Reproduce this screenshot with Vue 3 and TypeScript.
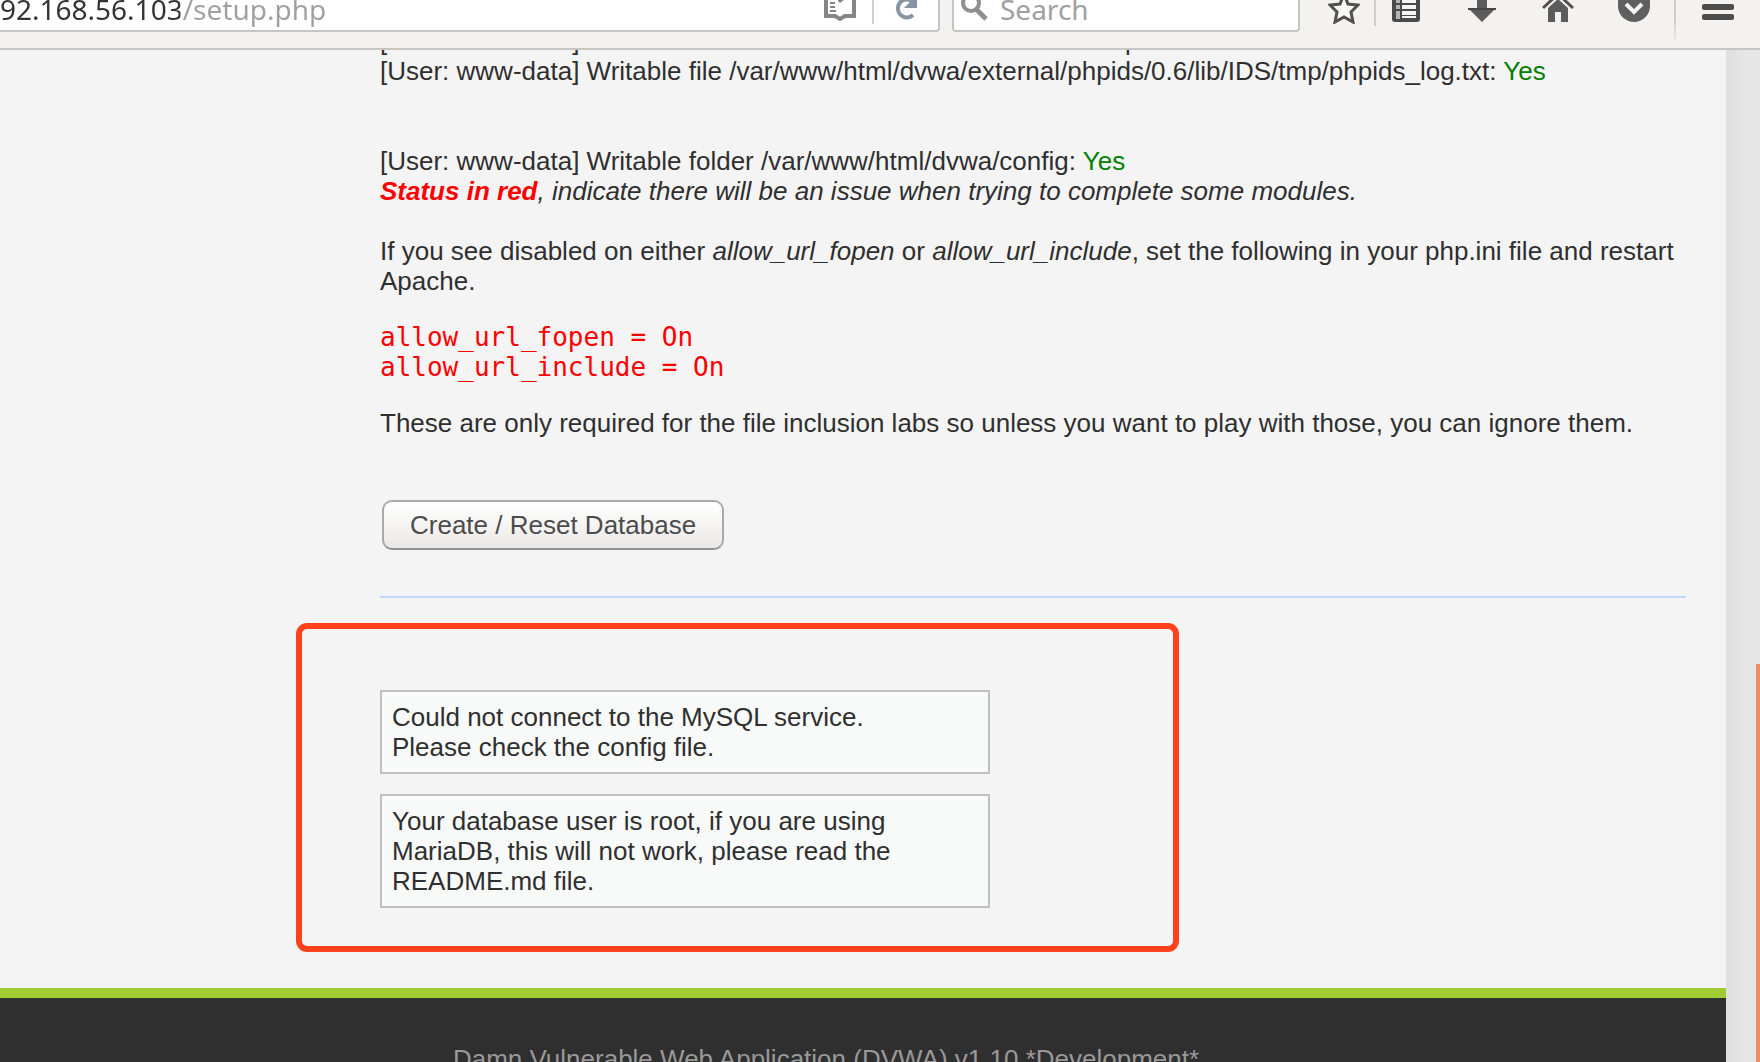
<script setup lang="ts">
import { ref } from 'vue'

interface Check {
  target: string
  status: string
  gap: boolean
}

const address = ref('92.168.56.103/setup.php')
const query = ref('')

const checks: Check[] = [
  { target: 'folder /var/www/html/dvwa/hackable/uploads/', status: 'Yes', gap: false },
  { target: 'file /var/www/html/dvwa/external/phpids/0.6/lib/IDS/tmp/phpids_log.txt', status: 'Yes', gap: true },
  { target: 'folder /var/www/html/dvwa/config', status: 'Yes', gap: false },
]

const messages: string[][] = [
  ['Could not connect to the MySQL service.', 'Please check the config file.'],
  ['Your database user is root, if you are using MariaDB, this will not work, please read the README.md file.'],
]
</script>

<template>
  <div class="window">
    <header class="toolbar">
      <div class="row">
        <div class="field address">
          <input v-model="address" class="url" type="text" aria-label="Address" />
          <button class="tool reader" type="button" aria-label="Reader view">
            <svg width="32" height="32" viewBox="0 0 32 32">
              <path d="M2 2h10l4 3 4-3h10v22h-9l-5 3-5-3H2z" fill="#fff" stroke="#858585" stroke-width="4" />
              <path d="M6 7h6M6 11h5M6 15h5M6 19h6" stroke="#858585" stroke-width="2" />
              <path d="M14 4v5l2 2 4-3V4" fill="#858585" />
            </svg>
          </button>
          <span class="divider inner"></span>
          <button class="tool reload" type="button" aria-label="Reload">
            <svg width="32" height="32" viewBox="0 0 32 32">
              <path d="M23 23a9 9 0 1 1-1-14" fill="none" stroke="#8794a1" stroke-width="4" />
              <path d="M27 3v13H14z" fill="#8794a1" />
            </svg>
          </button>
        </div>
        <div class="field search">
          <svg class="glass" width="32" height="32" viewBox="0 0 32 32">
            <circle cx="13" cy="11" r="8" fill="none" stroke="#8f8f8f" stroke-width="4" />
            <path d="M18 17l10 10" stroke="#8f8f8f" stroke-width="5" />
          </svg>
          <input v-model="query" class="query" type="text" placeholder="Search" aria-label="Search" />
        </div>
        <nav class="tools">
          <button class="tool narrow" type="button" aria-label="Bookmark this page">
            <svg width="32" height="32" viewBox="0 0 32 32">
              <path d="M16 2l4 10 10 1-7 7 2 10-9-5-9 5 2-10-7-7 10-1z" fill="#f7f7f6" stroke="#505050" stroke-width="3" />
            </svg>
          </button>
          <span class="divider"></span>
          <button class="tool narrow list" type="button" aria-label="Bookmarks">
            <svg width="32" height="32" viewBox="0 0 32 32">
              <rect x="2" y="2" width="28" height="28" rx="3" fill="#4a4a4a" />
              <path d="M6 9h4M6 15h4M6 21h4M6 25h4" stroke="#b4b4b4" stroke-width="4" />
              <path d="M12 9h14M12 15h14M12 21h14" stroke="#f5f5f5" stroke-width="4" />
              <path d="M12 25h14" stroke="#f5f5f5" stroke-width="2" />
            </svg>
          </button>
          <button class="tool" type="button" aria-label="Downloads">
            <svg width="32" height="32" viewBox="0 0 32 32">
              <path d="M11 2h10v14h9L16 30 2 16h9z" fill="#5c5c5c" />
              <path d="M2 17h28" stroke="#484848" stroke-width="2" />
            </svg>
          </button>
          <button class="tool" type="button" aria-label="Home">
            <svg width="32" height="32" viewBox="0 0 32 32">
              <path d="M1 16L16 2l15 14" fill="none" stroke="#505050" stroke-width="3" />
              <path d="M6 16L16 7l10 9v14h-7V20h-6v10H6z" fill="#5c5c5c" />
            </svg>
          </button>
          <button class="tool" type="button" aria-label="Save to Pocket">
            <svg width="32" height="32" viewBox="0 0 32 32">
              <path d="M3 2h26l3 3v9a16 16 0 0 1-32 0V5z" fill="#5f5f5f" />
              <path d="M8 12l8 8 8-8" fill="none" stroke="#f4f4f4" stroke-width="4" />
            </svg>
          </button>
          <span class="divider tall"></span>
          <button class="tool menu" type="button" aria-label="Open menu">
            <svg width="32" height="32" viewBox="0 0 32 32">
              <rect y="2" width="32" height="6" rx="2" fill="#4d4d4d" />
              <rect y="12" width="32" height="6" rx="2" fill="#4d4d4d" />
              <rect y="22" width="32" height="6" rx="2" fill="#4d4d4d" />
            </svg>
          </button>
        </nav>
      </div>
    </header>

    <div class="viewport">
      <div class="page">
        <main class="content">
          <div v-for="check in checks" :key="check.target" :class="{ gap: check.gap }">
            [User: www-data] Writable {{ check.target }}: <span class="ok">{{ check.status }}</span>
          </div>
          <p class="note"><strong>Status in red</strong>, indicate there will be an issue when trying to complete some modules.</p>
          <p class="help">
            If you see disabled on either <em>allow_url_fopen</em> or <em>allow_url_include</em>, set the following in your
            php.ini file and restart Apache.
          </p>
          <pre class="ini">allow_url_fopen = On
allow_url_include = On</pre>
          <p class="labs">These are only required for the file inclusion labs so unless you want to play with those, you can ignore them.</p>
          <button class="create" type="button">Create / Reset Database</button>
          <hr />
          <section class="results">
            <div v-for="(lines, i) in messages" :key="i" class="message">
              <div v-for="line in lines" :key="line">{{ line }}</div>
            </div>
            <div class="highlight"></div>
          </section>
        </main>
        <footer class="footer">Damn Vulnerable Web Application (DVWA) v1.10 *Development*</footer>
      </div>
      <div class="scrollbar"><div class="thumb"></div></div>
    </div>
  </div>
</template>

<style>
body {
  margin: 0;
  overflow: hidden;
}
</style>

<style scoped>
* {
  box-sizing: border-box;
}
.window {
  display: flex;
  flex-direction: column;
  height: 100vh;
  overflow: hidden;
  background: #f4f4f4;
  color: #2f2f2f;
  font: 26px/30px "Liberation Sans", Arial, sans-serif;
}
.toolbar {
  flex: none;
  overflow: hidden;
  padding-bottom: 16px;
  border-bottom: 2px solid #c8c4c0;
  background: #f3f2f1;
}
.row {
  display: flex;
  height: 48px;
  margin-top: -16px;
}
.field {
  display: flex;
  align-items: center;
  border: 2px solid #c8c4c0;
  border-radius: 4px;
  background: #fff;
}
.address {
  flex: 1;
  min-width: 0;
  margin-right: 12px;
  border-left: 0;
  border-radius: 0 4px 4px 0;
}
.search {
  width: 348px;
  padding-left: 4px;
}
.field input {
  flex: 1;
  min-width: 0;
  padding: 2px 0 0;
  border: 0;
  outline: 0;
  background: none;
  color: #333;
  font: 28px/40px "Noto Sans", sans-serif;
}
.field .url {
  text-indent: -7px;
  background: linear-gradient(to right, #333 180px, #a0a0a0 180px);
  background-clip: text;
  -webkit-text-fill-color: transparent;
}
.query::placeholder {
  color: #a0a0a0;
  opacity: 1;
}
.glass {
  flex: none;
  margin-right: 10px;
}
.tools {
  display: flex;
  align-items: center;
  flex: none;
  padding-left: 14px;
}
.tool {
  display: flex;
  align-items: center;
  justify-content: center;
  flex: none;
  width: 76px;
  height: 44px;
  padding: 0;
  border: 0;
  background: none;
}
.narrow {
  width: 60px;
}
.list {
  margin-right: 8px;
}
.reader,
.reload {
  width: 64px;
}
.menu {
  width: 84px;
}
.divider {
  flex: none;
  width: 2px;
  height: 36px;
  background: #d0cecc;
}
.inner {
  height: 32px;
}
.tall {
  height: 72px;
  margin-left: 2px;
  background: linear-gradient(#d0cecc 70%, #f3f2f1);
}
.viewport {
  display: flex;
  flex: 1;
  min-height: 0;
  overflow: hidden;
}
.page {
  flex: 1;
  min-width: 0;
}
.content {
  margin-top: -24px;
  padding: 0 40px 80px 380px;
}
.gap {
  margin-bottom: 60px;
}
.ok {
  color: #008000;
}
p {
  margin: 0;
}
.note {
  margin-bottom: 30px;
  font-style: italic;
}
.note strong {
  color: #f00;
}
.ini {
  margin: 26px 0;
  color: #f00;
  font: 26px/30px "DejaVu Sans Mono", monospace;
}
.labs {
  margin-bottom: 62px;
}
.create {
  display: block;
  height: 50px;
  margin-left: 2px;
  padding: 0 26px;
  border: 2px solid #a9a9a9;
  border-bottom-color: #929292;
  border-radius: 10px;
  background: linear-gradient(#fff, #ebe9e8);
  color: #4c4c4c;
  font: inherit;
}
hr {
  height: 2px;
  margin: 46px 0 0;
  border: 0;
  background: #c0d8ff;
}
.results {
  position: relative;
  display: flex;
  flex-direction: column;
  gap: 20px;
  width: 610px;
  margin-top: 92px;
}
.message {
  padding: 10px;
  border: 2px solid #c0c0c0;
  background: #f8faf9;
}
.highlight {
  position: absolute;
  inset: -67px -189px -44px -84px;
  border: 6px solid #ff421c;
  border-radius: 11px;
  pointer-events: none;
}
.footer {
  height: 120px;
  padding: 46px 74px 0 0;
  border-top: 10px solid #a0cc33;
  background: #2f2f2f;
  color: #999;
  text-align: center;
}
.scrollbar {
  display: flex;
  flex-direction: column;
  flex: none;
  align-items: flex-end;
  justify-content: flex-end;
  width: 34px;
  background: linear-gradient(to right, #dfdfdf, #e6e6e6 60%);
}
.thumb {
  width: 4px;
  height: 398px;
  background: #f08f67;
}
</style>
